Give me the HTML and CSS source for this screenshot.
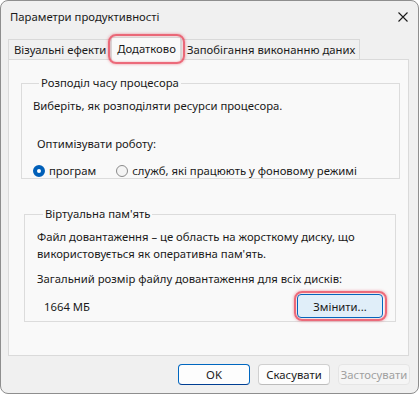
FILE: index.html
```html
<!DOCTYPE html>
<html lang="uk">
<head>
    <meta charset="UTF-8">
    <title>Параметри продуктивності</title>
    <link rel="stylesheet" href="styles.css">
</head>
<body>
    <div class="window">
        <div class="titlebar">
            <span class="title">Параметри продуктивності</span>
            <svg class="close" width="10" height="10" viewBox="0 0 10 10">
                <path d="M0.5 0.5 L9.5 9.5 M9.5 0.5 L0.5 9.5" stroke="#1a1a1a" stroke-width="1.1" fill="none"/>
            </svg>
        </div>
        <div class="tabs">
            <div class="tab">Візуальні ефекти</div>
            <div class="tab active marked">Додатково</div>
            <div class="tab">Запобігання виконанню даних</div>
        </div>
        <div class="panel">
            <fieldset class="group cpu">
                <legend>Розподіл часу процесора</legend>
                <p class="line first">Виберіть, як розподіляти ресурси процесора.</p>
                <p class="line optimize">Оптимізувати роботу:</p>
                <div class="radios">
                    <label class="radio"><span class="dot checked"></span>програм</label>
                    <label class="radio"><span class="dot"></span>служб, які працюють у фоновому режимі</label>
                </div>
            </fieldset>
            <fieldset class="group memory">
                <legend>Віртуальна пам'ять</legend>
                <p class="line first">Файл довантаження – це область на жорсткому диску, що<br>використовується як оперативна пам'ять.</p>
                <p class="line total">Загальний розмір файлу довантаження для всіх дисків:</p>
                <div class="size-row">
                    <span class="size">1664 МБ</span>
                    <button class="btn change marked">Змінити...</button>
                </div>
            </fieldset>
        </div>
        <div class="actions">
            <button class="btn default">OK</button>
            <button class="btn">Скасувати</button>
            <button class="btn disabled">Застосувати</button>
        </div>
    </div>
</body>
</html>
```

FILE: styles.css
```css
body {
    margin: 0;
    padding: 0;
    background-color: #fff;
    font-family: 'Noto Sans', sans-serif;
    font-size: 11.3px;
    color: #1a1a1a;
}
.window {
    width: 419px;
    height: 394px;
    box-sizing: border-box;
    border: 1px solid #8e8e8e;
    border-radius: 8px;
    background-color: #f0f0f0;
    display: flex;
    flex-direction: column;
    overflow: hidden;
}
.titlebar {
    height: 31px;
    display: flex;
    align-items: center;
    justify-content: space-between;
    padding: 0 10px 0 9px;
    box-sizing: border-box;
}
.title {
    font-size: 11.3px;
}
.tabs {
    display: flex;
    align-items: flex-end;
    height: 27px;
    margin-left: 7px;
}
.tab {
    height: 19px;
    padding: 0 4px 0 5px;
    line-height: 19px;
    border: 1px solid #d9d9d9;
    border-bottom: none;
    background-color: #f0f0f0;
    margin-right: -1px;
}
.tab.active {
    height: 22px;
    line-height: 21px;
    background-color: #f9f9f9;
    position: relative;
    z-index: 1;
    margin-bottom: -1px;
    margin-left: 1px;
    margin-right: 0;
}
.marked {
    position: relative;
}
.marked::after {
    content: '';
    position: absolute;
    inset: -4px -5px -4px -4px;
    border: 2px solid rgba(232, 70, 90, 0.8);
    border-radius: 8px;
    box-shadow: 0 0 3px rgba(232, 70, 90, 0.6), inset 0 0 2px rgba(232, 70, 90, 0.5);
    pointer-events: none;
}
.panel {
    height: 297px;
    margin: 0 9px 0 7px;
    box-sizing: border-box;
    border: 1px solid #dadada;
    background-color: #f9f9f9;
    padding-top: 15px;
}
.group {
    border: 1px solid #dcdcdc;
    margin: 0;
    padding: 0;
    box-sizing: border-box;
}
.group legend {
    padding: 0 2px;
    margin-left: 6px;
    line-height: 16px;
}
.cpu {
    margin: 0 8px 0 12px;
    height: 104px;
    padding-left: 11px;
}
.memory {
    margin: 27px 12px 0 15px;
    height: 116px;
    padding-left: 12px;
}
.line {
    margin: 0;
    line-height: 17px;
}
.cpu .first {
    margin-top: 6px;
}
.optimize {
    margin-top: 21px;
    padding-left: 4px;
}
.radios {
    display: flex;
    margin-top: 10px;
    gap: 20px;
}
.radio {
    display: flex;
    align-items: center;
    gap: 4px;
    line-height: 17px;
}
.dot {
    width: 12px;
    height: 12px;
    box-sizing: border-box;
    border-radius: 50%;
    border: 1px solid #8a8a8a;
    background-color: #f4f4f4;
}
.dot.checked {
    border: 4px solid #005fb8;
    background-color: #fff;
}
.memory .first {
    margin-top: 6px;
}
.total {
    margin-top: 8px;
}
.size-row {
    display: flex;
    align-items: center;
    justify-content: space-between;
    margin-top: 7px;
    padding-left: 7px;
    padding-right: 12px;
}
.btn {
    font-family: 'Noto Sans', sans-serif;
    font-size: 11.3px;
    color: #1a1a1a;
    height: 21px;
    width: 72px;
    padding: 0;
    border: 1px solid #d0d0d0;
    border-bottom-color: #bcbcbc;
    border-radius: 4px;
    background-color: #fdfdfd;
}
.btn.change {
    width: 86px;
    height: 24px;
    background-color: #e0eef9;
    border-color: #0067c0;
}
.btn.default {
    border-color: #0067c0;
    border-bottom-color: #003e92;
}
.btn.disabled {
    color: #a0a0a0;
    background-color: #f5f5f5;
    border-color: #e5e5e5;
}
.actions {
    display: flex;
    justify-content: flex-end;
    gap: 8px;
    padding: 8px 8px 0 0;
}
```
